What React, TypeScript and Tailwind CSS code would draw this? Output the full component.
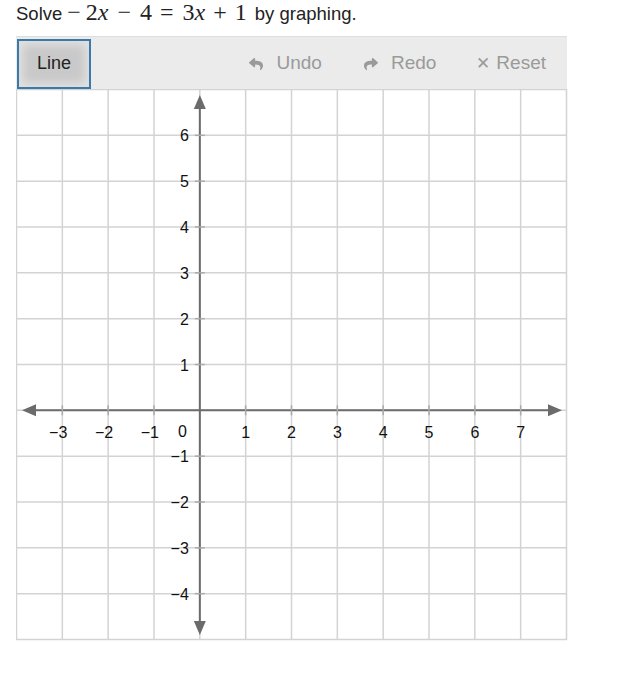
import React from "react";
import { FaReply, FaShare } from "react-icons/fa";

const U = 550 / 12;
const OX = 4 * U;
const OY = 7 * U;

function Graph() {
  const lines: React.ReactNode[] = [];
  for (let i = 0; i <= 12; i++) {
    const p = i * U + 0.5;
    lines.push(<line key={"v" + i} x1={p} y1={0} x2={p} y2={551} stroke="#d3d3d3" strokeWidth={1.5} />);
    lines.push(<line key={"h" + i} x1={0} y1={p} x2={551} y2={p} stroke="#d3d3d3" strokeWidth={1.5} />);
  }
  const xs = [-3, -2, -1, 1, 2, 3, 4, 5, 6, 7];
  const ys = [6, 5, 4, 3, 2, 1, -1, -2, -3, -4];
  const ax = OX + 0.5;
  const ay = OY + 0.5;
  return (
    <svg width={552} height={552} className="block" style={{ fontFamily: '"Liberation Sans", Arial, sans-serif' }}>
      {lines}
      <line x1={14} y1={ay} x2={538} y2={ay} stroke="#6b6b6b" strokeWidth={2} />
      <line x1={ax} y1={14} x2={ax} y2={538} stroke="#6b6b6b" strokeWidth={2} />
      <polygon points={`${6},${ay} ${20},${ay - 6} ${20},${ay + 6}`} fill="#6b6b6b" />
      <polygon points={`${546},${ay} ${532},${ay - 6} ${532},${ay + 6}`} fill="#6b6b6b" />
      <polygon points={`${ax},${6} ${ax - 6},${20} ${ax + 6},${20}`} fill="#6b6b6b" />
      <polygon points={`${ax},${546} ${ax - 6},${532} ${ax + 6},${532}`} fill="#6b6b6b" />
      {xs.map((x) => {
        const px = OX + x * U + 0.5;
        return (
          <g key={"xt" + x}>
            <line x1={px} y1={ay - 5} x2={px} y2={ay + 5} stroke="#aaa" strokeWidth={1.5} />
            <text x={x < 0 ? px + 5 : px} y={ay + 28} fontSize={16} textAnchor={x < 0 ? "end" : "middle"} fill="#111">
              {x < 0 ? "\u2212" + -x : String(x)}
            </text>
          </g>
        );
      })}
      {ys.map((y) => {
        const py = OY - y * U + 0.5;
        return (
          <g key={"yt" + y}>
            <line x1={ax - 5} y1={py} x2={ax + 5} y2={py} stroke="#aaa" strokeWidth={1.5} />
            <text x={ax - 11} y={py + 6} fontSize={16} textAnchor="end" fill="#111">
              {y < 0 ? "\u2212" + -y : String(y)}
            </text>
          </g>
        );
      })}
      <text x={ax - 13} y={ay + 27} fontSize={16} textAnchor="end" fill="#111">0</text>
    </svg>
  );
}

export default function App() {
  const serif = { fontFamily: '"Liberation Serif", "Times New Roman", serif' };
  return (
    <div className="w-[631px] h-[680px] bg-white pl-4" style={{ fontFamily: '"Liberation Sans", Arial, sans-serif' }}>
      <div className="h-[24px] text-[18.5px] leading-[24px] text-[#222] flex items-baseline whitespace-nowrap">
        <span className="mr-[5px]">Solve</span>
        <span className="text-[24px] leading-[24px] flex items-baseline" style={serif}>
          <span>−</span>
          <span className="ml-[5px]">2<i>x</i></span>
          <span className="ml-[9px]">−</span>
          <span className="ml-[9px]">4</span>
          <span className="ml-[8px]">=</span>
          <span className="ml-[9px]">3<i>x</i></span>
          <span className="ml-[8px]">+</span>
          <span className="ml-[8px]">1</span>
        </span>
        <span className="ml-[8px]">by graphing.</span>
      </div>
      <div className="mt-[12px] w-[551px] h-[54px] bg-[#ebebeb] border-t border-[#dedede] flex items-center">
        <div className="ml-[1px] w-[74px] h-[50px] border-2 border-[#3b79a8] bg-[#c9c9c9] shadow-[inset_0_0_10px_4px_rgba(255,255,255,0.45)] flex items-center justify-center text-[18px] text-[#222]">
          Line
        </div>
        <div className="flex-1" />
        <div className="flex items-center text-[19px] text-[#9a9a9a]">
          <FaReply className="w-[16px] h-[14px] mr-[13px]" />
          <span>Undo</span>
        </div>
        <div className="flex items-center text-[19px] text-[#9a9a9a] ml-[41px]">
          <FaShare className="w-[16px] h-[14px] mr-[12px]" />
          <span>Redo</span>
        </div>
        <div className="flex items-center text-[19px] text-[#9a9a9a] ml-[40px] mr-[21px]">
          <span className="text-[17px] mr-[6px]">✕</span>
          <span>Reset</span>
        </div>
      </div>
      <div className="-mt-[1px]">
        <Graph />
      </div>
    </div>
  );
}
